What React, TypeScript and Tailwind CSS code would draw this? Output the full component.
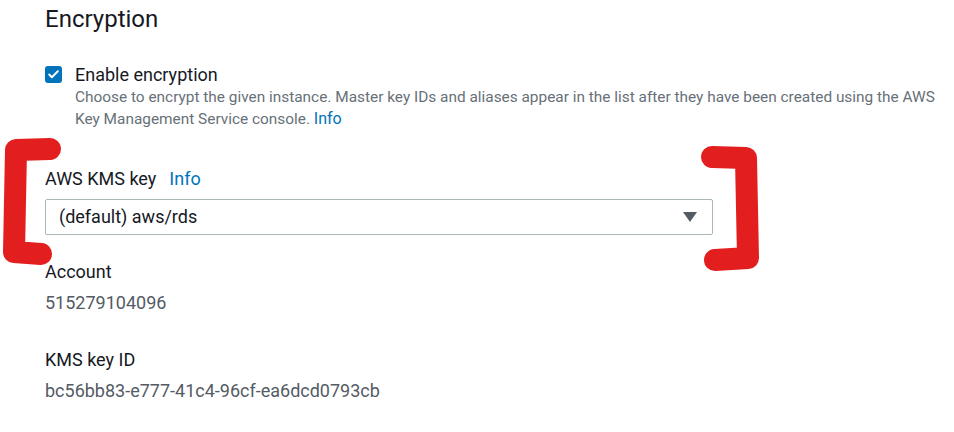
import { Check } from "lucide-react";

const FONT = "font-['Roboto','Liberation_Sans',sans-serif]";

function Field({ label, value, className }: { label: string; value: string; className?: string }) {
  return (
    <div className={`flex flex-col ${className ?? ""}`}>
      <span className="text-[18px] leading-[22px] text-[#16191f]">{label}</span>
      <span className="mt-[9px] text-[18px] leading-[22px] text-[#545b64]">{value}</span>
    </div>
  );
}

function Bracket({ d }: { d: string }) {
  return (
    <path
      d={d}
      fill="none"
      stroke="#e31e1e"
      strokeWidth={22}
      strokeLinecap="round"
      strokeLinejoin="round"
    />
  );
}

export default function App() {
  return (
    <div className={`relative w-[954px] h-[432px] overflow-hidden bg-white ${FONT}`}>
      <div className="pl-[45px] pt-[4px] flex flex-col">
        <h2 className="text-[24px] leading-[30px] text-[#16191f]">Encryption</h2>

        <div className="mt-[30px] flex gap-[13px]">
          <div className="mt-[2px] w-[17px] h-[17px] shrink-0 rounded-[3px] bg-[#0073bb] flex items-center justify-center">
            <Check size={13} strokeWidth={3.5} className="text-white" />
          </div>
          <div className="flex flex-col w-[870px]">
            <span className="text-[18px] leading-[22px] text-[#16191f]">Enable encryption</span>
            <p className="text-[15.4px] leading-[22px] text-[#687078]">
              Choose to encrypt the given instance. Master key IDs and aliases appear in the list after they have been created using the AWS Key Management Service console.{" "}
              <a className="text-[16px] text-[#0073bb]">Info</a>
            </p>
          </div>
        </div>

        <div className="mt-[38px] flex items-center gap-[13px]">
          <span className="text-[18px] leading-[22px] text-[#16191f]">AWS KMS key</span>
          <a className="text-[18px] leading-[22px] text-[#0073bb]">Info</a>
        </div>

        <div className="mt-[9px] w-[668px] h-[36px] border border-[#aab7b8] rounded-[2px] flex items-center justify-between pl-[13px] pr-[15px]">
          <span className="text-[18px] leading-[22px] text-[#16191f]">(default) aws/rds</span>
          <svg width="14" height="10" viewBox="0 0 14 10">
            <path d="M0 0 H14 L7 10 Z" fill="#545b64" />
          </svg>
        </div>

        <Field className="mt-[26px]" label="Account" value="515279104096" />
        <Field className="mt-[35px]" label="KMS key ID" value="bc56bb83-e777-41c4-96cf-ea6dcd0793cb" />
      </div>

      <svg className="absolute inset-0 pointer-events-none" width="954" height="432">
        <Bracket d="M50 149 L16 150 L14 252 L41 254" />
        <Bracket d="M712 157 L746 158 L748 258 L715 260" />
      </svg>
    </div>
  );
}
